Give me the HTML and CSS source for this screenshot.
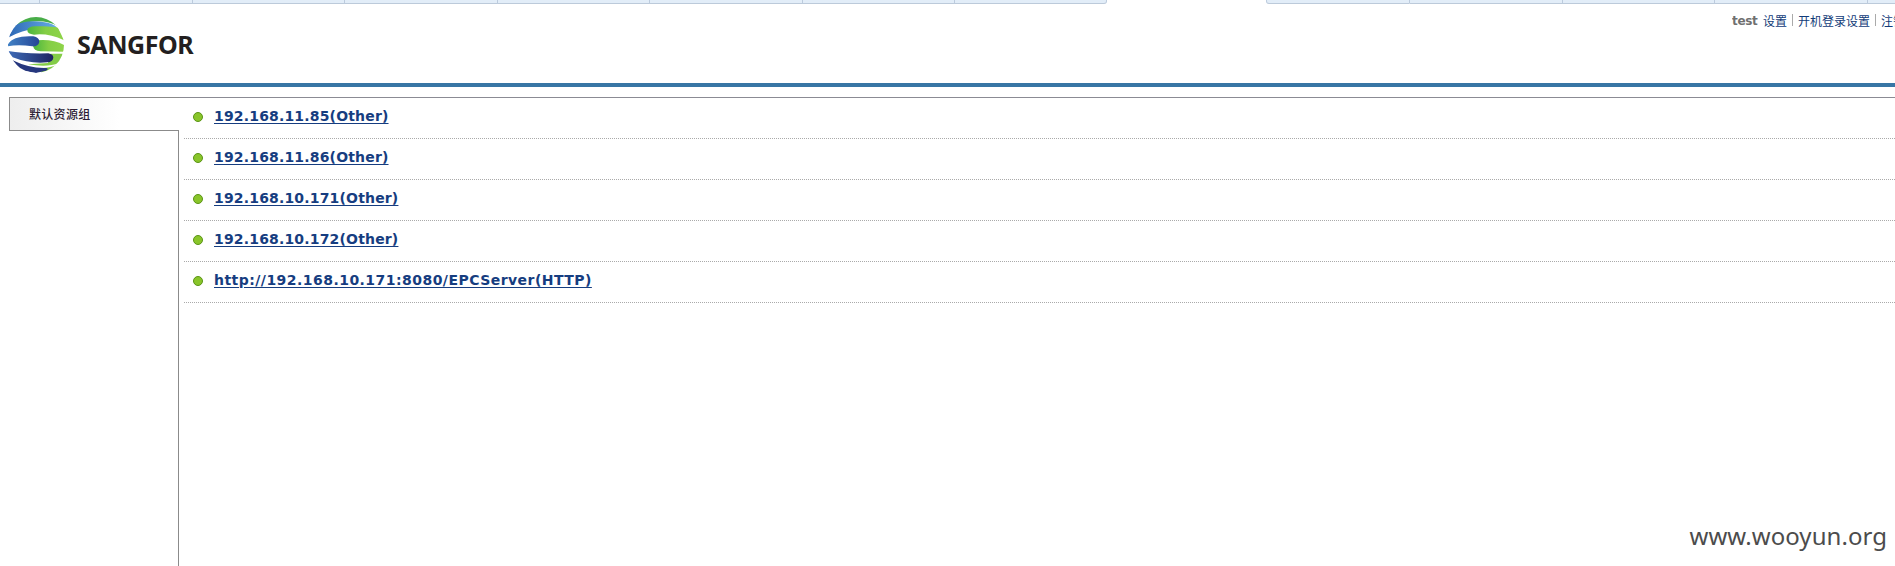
FILE: index.html
```html
<!DOCTYPE html>
<html lang="zh-CN">
<head>
<meta charset="utf-8">
<title>SANGFOR</title>
<link rel="stylesheet" href="styles.css">
</head>
<body>
<div class="tabs"><i class="t-first"></i><i></i><i></i><i></i><i></i><i></i><i></i><i class="t-before"></i><i class="active"></i><i class="t-next"></i><i></i><i></i><i></i><i class="t-last"></i></div>
<header class="header">
  <div class="brand">
    <svg class="logo" viewBox="0 0 168 168" width="56" height="56">
      <defs>
        <clipPath id="ball"><circle cx="84" cy="84" r="84"/></clipPath>
        <linearGradient id="sky" x2="1"><stop stop-color="#2c67b5"/><stop offset="1" stop-color="#67aee6"/></linearGradient>
        <linearGradient id="blue" x2="1"><stop stop-color="#4181c5"/><stop offset="1" stop-color="#254596"/></linearGradient>
        <linearGradient id="navy" x2="1"><stop stop-color="#3e6cb8"/><stop offset="1" stop-color="#1e2361"/></linearGradient>
        <linearGradient id="green" x2="1"><stop stop-color="#4bb53f"/><stop offset="0.5" stop-color="#84ce45"/><stop offset="1" stop-color="#8fd449"/></linearGradient>
      </defs>
      <g clip-path="url(#ball)">
        <path fill="#48ad48" d="M44 0H125L150 27Q100 0 26 24Z"/>
        <path fill="url(#sky)" d="M20 24Q60 6 110 16Q135 20 148 32Q110 30 82 36Q45 38 0 62Z"/>
        <path fill="url(#green)" d="M58 40Q58 29 82 28Q132 26 150 32L168 70Q122 48 78 53Q58 51 58 40Z"/>
        <path fill="url(#green)" d="M88 70Q135 66 168 84V104Q138 104 98 103Q76 101 76 88Z"/>
        <path fill="url(#blue)" d="M0 82Q15 55 76 58Q94 62 94 74Q92 88 73 88Q30 82 0 88Z"/>
        <path fill="#83cc47" d="M127 110L168 110L152 138Q120 152 60 142L120 138Z"/>
        <path fill="url(#navy)" d="M0 102Q50 111 121 109Q136 112 136 122Q134 135 118 136Q65 141 14 121Z"/>
        <path fill="#83cc47" d="M100 153Q130 152 148 143L130 162L100 168Z"/>
        <path fill="#26377e" d="M14 130Q65 155 115 153Q124 156 114 161L84 168L40 160Z"/>
      </g>
    </svg>
    <span class="wordmark">SANGFOR</span>
  </div>
  <nav class="user"><b>test</b><a>设置</a><s></s><a>开机登录设置</a><s></s><a>注销</a></nav>
</header>
<main class="main">
  <aside class="side"><div class="group">默认资源组</div><div class="rest"></div></aside>
  <ul class="list">
    <li><a>192.168.11.85(Other)</a></li>
    <li><a>192.168.11.86(Other)</a></li>
    <li><a>192.168.10.171(Other)</a></li>
    <li><a>192.168.10.172(Other)</a></li>
    <li><a class="url">http://192.168.10.171:8080/EPCServer(HTTP)</a></li>
  </ul>
</main>
<div class="mark">www.wooyun.org</div>
</body>
</html>
```
FILE: styles.css
```css
* { box-sizing: border-box; }
body { margin: 0; width: 1895px; height: 566px; overflow: hidden; background: #fff; font: 12px "DejaVu Sans", "Noto Sans CJK SC", sans-serif; }
.tabs { display: flex; height: 4px; }
.tabs i { flex: none; width: 152.5px; background: #e2edf8; border-right: 1px solid #bccbdd; border-bottom: 1px solid #bccada; }
.tabs .t-first { width: 40px; }
.tabs .t-before { width: 152px; border-bottom-right-radius: 3px; }
.tabs .active { width: 159px; background: #fff; border: 0; }
.tabs .t-next { width: 144px; border-left: 1px solid #bccbdd; border-bottom-left-radius: 3px; }
.tabs .t-last { width: 40px; }
.header { height: 83px; border-bottom: 4px solid #3876a5; display: flex; justify-content: space-between; }
.brand { display: flex; align-items: flex-start; padding: 13px 0 0 8px; }
.wordmark { margin: 9px 0 0 13px; font: bold 25px/36px "Noto Sans", sans-serif; letter-spacing: -0.45px; color: #231f20; }
.user { display: flex; align-items: center; width: 163px; height: 18px; margin-top: 7px; white-space: nowrap; overflow: hidden; color: #123b78; }
.user b { width: 31px; flex: none; color: #707070; font-size: 12px; line-height: 16px; padding-top: 1px; letter-spacing: -0.3px; }
.user a { flex: none; }
.user s { flex: none; width: 1px; height: 12px; background: #aaa; margin: 0 5px; }
.main { display: flex; margin-top: 10px; height: 469px; }
.side { display: flex; flex-direction: column; width: 170px; margin-left: 9px; }
.group { height: 34px; border: 1px solid #8b8b8b; border-right: 0; padding-left: 19px; line-height: 34px; font-weight: 500; letter-spacing: 0.3px; color: #2d1d35; background: linear-gradient(90deg, #eee, #fff 65%); }
.rest { flex: 1; border-right: 1px solid #8b8b8b; }
.list { flex: 1; margin: 0; padding: 0 0 0 5px; list-style: none; border-top: 1px solid #8b8b94; }
.list li { display: flex; height: 41px; padding-left: 10px; background: repeating-linear-gradient(90deg, #aaa 0 1px, #fff 1px 2px) 0 100% / 100% 1px no-repeat; }
.list li::before { content: ""; width: 8px; height: 8px; margin: 14px 12px 0 -1px; border-radius: 50%; background: #89c52a; border: 1px solid #5b9417; flex: none; }
.list a { margin-left: -1px; font: bold 14px/37px "DejaVu Sans", sans-serif; letter-spacing: 0.17px; color: #163d80; text-decoration: underline; text-underline-offset: 2px; }
.list .url { letter-spacing: 0.46px; }
.mark { position: absolute; right: 8px; bottom: 13px; font: 24px/34px "Noto Sans", sans-serif; letter-spacing: 0.05px; color: #4c4c4c; }
```
